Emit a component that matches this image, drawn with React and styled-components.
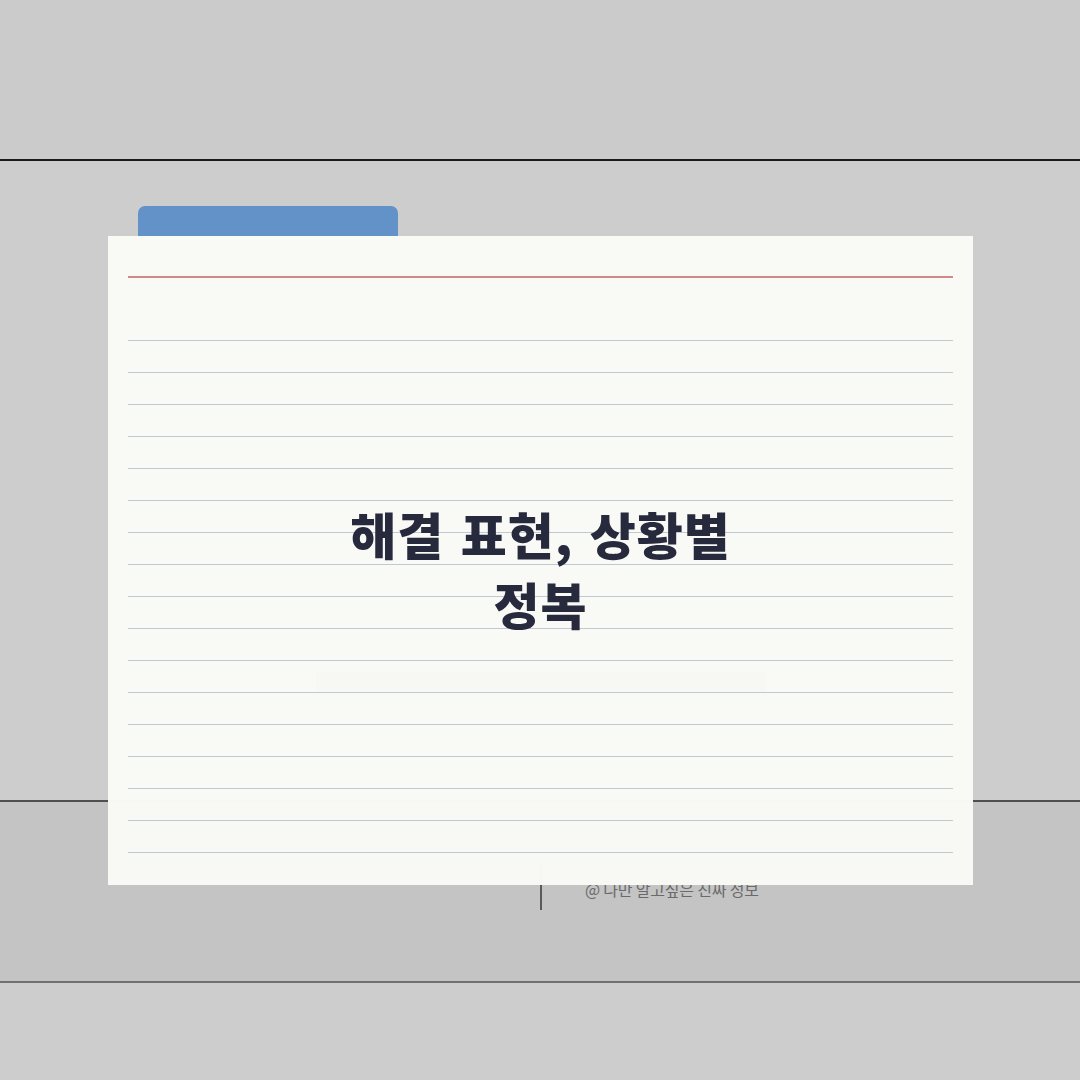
import styled, { createGlobalStyle } from "styled-components";

const GlobalStyle = createGlobalStyle`
  html, body {
    margin: 0;
    padding: 0;
    background: #cdcdcd;
  }
  * {
    box-sizing: border-box;
  }
`;

const Page = styled.div`
  width: 1080px;
  height: 1080px;
  display: grid;
  overflow: hidden;
  font-family: "Noto Sans CJK KR", "Noto Sans", sans-serif;
`;

const Backdrop = styled.div`
  grid-area: 1 / 1;
  display: flex;
  flex-direction: column;
`;

const Band = styled.div`
  height: ${(p) => p.h}px;
  background: ${(p) => p.bg};
  border-bottom: ${(p) => (p.rule ? `2px solid ${p.rule}` : "none")};
`;

const FooterBand = styled(Band)`
  display: flex;
  align-items: flex-start;
  gap: 43px;
  padding: 63px 0 0 540px;
`;

const Divider = styled.div`
  width: 2px;
  height: 45px;
  background: #5a5a5a;
`;

const Credit = styled.span`
  margin-top: 12px;
  font-size: 16px;
  color: #6a6a6a;
  letter-spacing: -0.2px;
`;

const Stage = styled.div`
  grid-area: 1 / 1;
  padding: 206px 0 0 108px;
  display: flex;
  flex-direction: column;
  align-items: flex-start;
`;

const Tab = styled.div`
  margin-left: 30px;
  width: 260px;
  height: 30px;
  background: #6392c8;
  border-radius: 7px 7px 0 0;
`;

const Card = styled.div`
  width: 865px;
  height: 649px;
  padding: 40px 20px 0;
  background: rgba(249, 250, 246, 0.985);
  display: flex;
  flex-direction: column;
`;

const Margin = styled.div`
  height: 2px;
  background: #d08a8a;
`;

const Ruled = styled.div`
  margin-top: 31px;
  height: 544px;
  background-image: repeating-linear-gradient(
    to bottom,
    transparent 0,
    transparent 31px,
    #bfc9d4 31px,
    #bfc9d4 32px
  );
  display: flex;
  flex-direction: column;
  align-items: center;
  padding-top: 189px;
`;

const Title = styled.h1`
  margin: 0;
  font-size: 50px;
  font-weight: 900;
  line-height: 70px;
  letter-spacing: 1px;
  word-spacing: 4px;
  color: #272a3d;
  text-align: center;
`;

const Subtitle = styled.div`
  margin-top: 34px;
  width: 450px;
  height: 20px;
  background: rgba(0, 0, 0, 0.006);
`;

export default function App() {
  return (
    <Page>
      <GlobalStyle />
      <Backdrop>
        <Band h={161} bg="#cbcbcb" rule="#1a1a1a" />
        <Band h={641} bg="#cdcdcd" rule="#4f4f4f" />
        <FooterBand h={181} bg="#c4c4c4" rule="#707070">
          <Divider />
          <Credit>@ 나만 알고싶은 진짜 정보</Credit>
        </FooterBand>
        <Band h={97} bg="#cdcdcd" />
      </Backdrop>
      <Stage>
        <Tab />
        <Card>
          <Margin />
          <Ruled>
            <Title>
              해결 표현, 상황별
              <br />
              정복
            </Title>
            <Subtitle />
          </Ruled>
        </Card>
      </Stage>
    </Page>
  );
}
